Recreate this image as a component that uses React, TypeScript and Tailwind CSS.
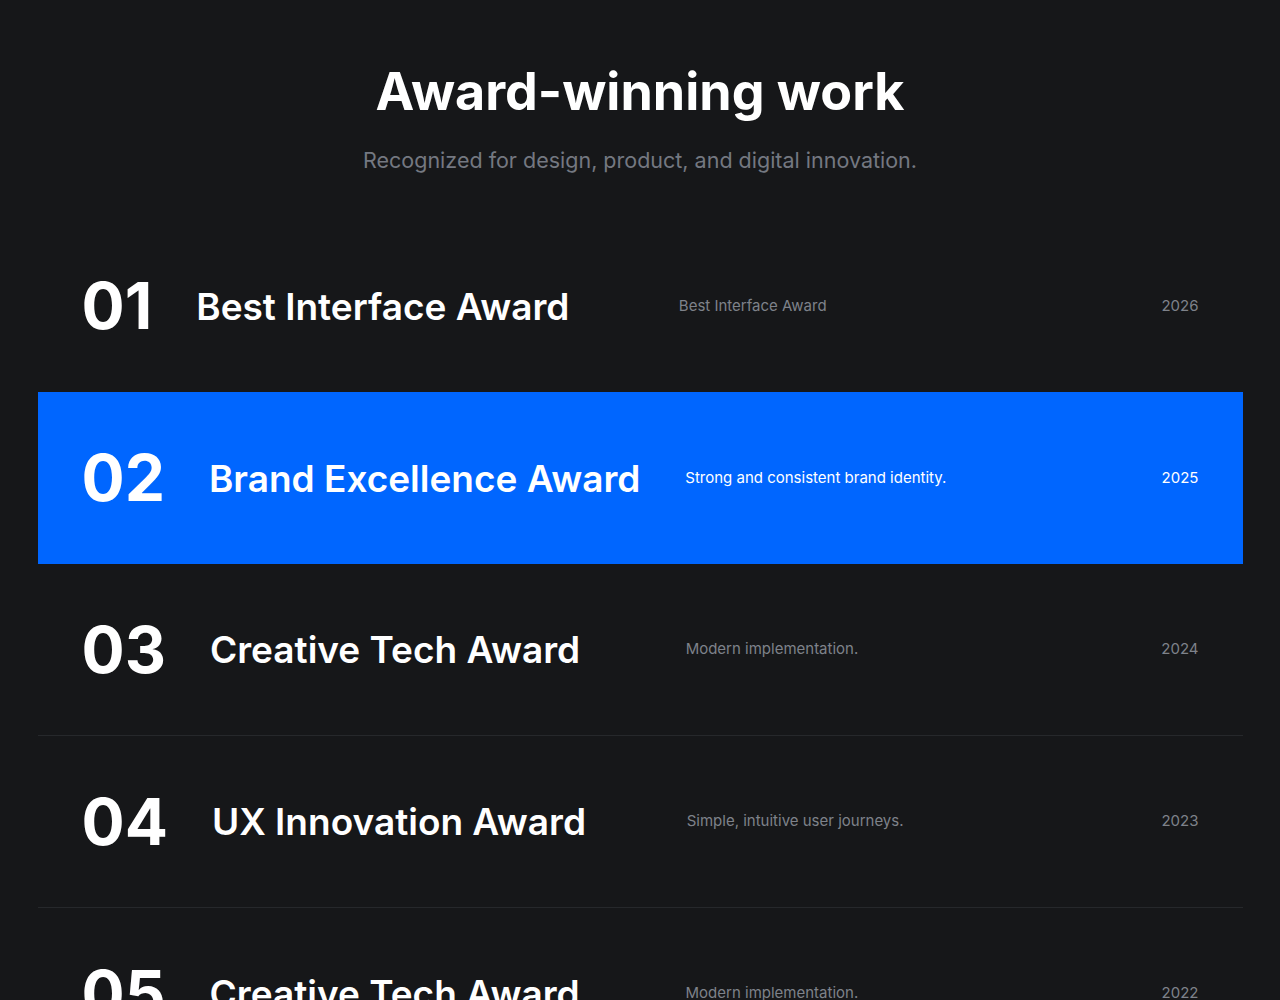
const awards = [
  { no: "01", title: "Best Interface Award", desc: "Best Interface Award", year: "2026" },
  { no: "02", title: "Brand Excellence Award", desc: "Strong and consistent brand identity.", year: "2025", active: true },
  { no: "03", title: "Creative Tech Award", desc: "Modern implementation.", year: "2024" },
  { no: "04", title: "UX Innovation Award", desc: "Simple, intuitive user journeys.", year: "2023" },
  { no: "05", title: "Creative Tech Award", desc: "Modern implementation.", year: "2022" },
]

export default function App() {
  return (
    <section className="min-h-screen bg-[#161719] font-['Inter',sans-serif] overflow-hidden">
      <div className="pt-[66px] text-center">
        <h2 className="text-[52px] leading-[52px] font-bold text-white">Award-winning work</h2>
        <p className="mt-[28px] text-[21.5px] leading-7 text-[#747881]">
          Recognized for design, product, and digital innovation.
        </p>
      </div>

      <div className="mx-auto mt-[46px] w-[1205px]">
        {awards.map((a, i) => (
          <div
            key={i}
            className={
              a.active
                ? "grid h-[172px] grid-cols-[auto_1fr_1fr_auto] items-center gap-11 bg-[#0066ff] px-11"
                : i === 0
                ? "grid h-[172px] grid-cols-[auto_1fr_1fr_auto] items-center gap-11 px-11"
                : "grid h-[172px] grid-cols-[auto_1fr_1fr_auto] items-center gap-11 border-b border-[#26282b] px-11"
            }
          >
            <span className="text-[64px] leading-none font-bold text-white">{a.no}</span>
            <h3 className="text-[37px] leading-none font-semibold text-white">{a.title}</h3>
            <p className={a.active ? "text-[15px] text-white" : "text-[15px] text-[#7e828a]"}>{a.desc}</p>
            <span className={a.active ? "text-[15px] text-white" : "text-[15px] text-[#7e828a]"}>{a.year}</span>
          </div>
        ))}
      </div>
    </section>
  )
}
